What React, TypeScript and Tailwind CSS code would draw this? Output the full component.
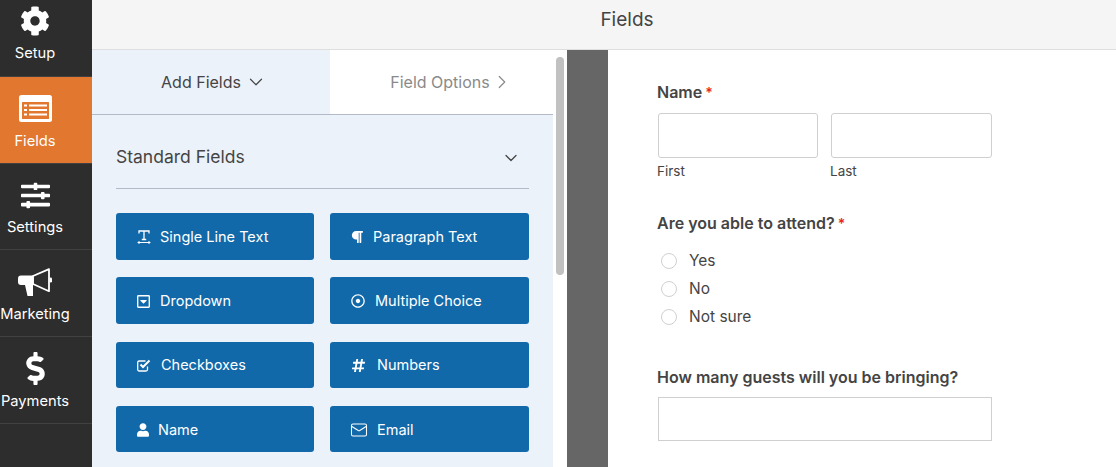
import React from 'react';
import {
  FaCog,
  FaSlidersH,
  FaDollarSign,
  FaParagraph,
  FaRegCaretSquareDown,
  FaRegDotCircle,
  FaHashtag,
  FaUser,
} from 'react-icons/fa';
import { ChevronDown, ChevronRight, Mail } from 'lucide-react';

const FieldsIcon = () => (
  <svg viewBox="0 0 33 27" className="w-[33px] h-[27px]">
    <path
      fill="#fff"
      fillRule="evenodd"
      d="M2.500 0h28A2.500 2.500 0 0 1 33 2.500v22a2.500 2.500 0 0 1-2.500 2.500h-28A2.500 2.500 0 0 1 0 24.500v-22A2.500 2.500 0 0 1 2.500 0ZM3 7.500v16a.5.5 0 0 0 .5.5h26a.5.5 0 0 0 .5-.5v-16a.5.5 0 0 0-.5-.5h-26a.5.5 0 0 0-.5.5Z"
    />
    <path
      fill="#fff"
      d="M5 9.500h3v2H5zM10 9.500h18v2H10zM5 14h3v2H5zM10 14h18v2H10zM5 18.500h3v2H5zM10 18.500h18v2H10z"
    />
  </svg>
);

const BullhornIcon = () => (
  <svg viewBox="0 0 35 29" className="w-[35px] h-[29px]">
    <path fill="#fff" d="M3 7.500h12.500v9H15V28H9.500L7 17H3a3 3 0 0 1-3-3v-3.500a3 3 0 0 1 3-3Z" />
    <path fill="none" stroke="#fff" strokeWidth="1.800" strokeLinejoin="round" d="M15 8 31 1.200v22L15 16Z" />
    <rect x="31.500" y="9.500" width="2.500" height="5" rx="1.200" fill="#fff" />
  </svg>
);

const TextIcon = () => (
  <svg viewBox="0 0 14 14" className="w-[14px] h-[14px]">
    <path fill="none" stroke="#fff" strokeWidth="1.300" d="M2 3.500V1h10v2.500M7 1v8.500M4.800 9.500h4.400" />
    <path fill="none" stroke="#fff" strokeWidth="1" d="M1 12.500h12M2.500 11 1 12.500 2.500 14M11.500 11l1.500 1.500-1.500 1.500" />
  </svg>
);

const CheckIcon = () => (
  <svg viewBox="0 0 14 13" className="w-[14px] h-[13px]">
    <path fill="none" stroke="#fff" strokeWidth="1.300" d="M10.500 7.500v3a1.500 1.500 0 0 1-1.500 1.500H2.200A1.500 1.500 0 0 1 .7 10.500V3.500A1.500 1.500 0 0 1 2.200 2H8.500" />
    <path fill="none" stroke="#fff" strokeWidth="2" d="m3.500 5.500 2.500 2.500 6.500-6.500" />
  </svg>
);

const navItems = [
  { label: 'Setup', icon: <FaCog className="w-[30px] h-[30px]" /> },
  { label: 'Fields', icon: <FieldsIcon />, active: true },
  { label: 'Settings', icon: <FaSlidersH className="w-[29px] h-[29px]" /> },
  { label: 'Marketing', icon: <BullhornIcon /> },
  { label: 'Payments', icon: <FaDollarSign className="w-[33px] h-[33px]" /> },
];

const fieldButtons = [
  { label: 'Single Line Text', icon: <TextIcon />, gap: 'gap-[9px]' },
  { label: 'Paragraph Text', icon: <FaParagraph className="w-[12px] h-[14px]" />, gap: 'gap-[10px]' },
  { label: 'Dropdown', icon: <FaRegCaretSquareDown className="w-[13px] h-[15px]" />, gap: 'gap-[10px]' },
  { label: 'Multiple Choice', icon: <FaRegDotCircle className="w-[14px] h-[14px]" />, gap: 'gap-[10px]' },
  { label: 'Checkboxes', icon: <CheckIcon />, gap: 'gap-[10px]' },
  { label: 'Numbers', icon: <FaHashtag className="w-[15px] h-[15px]" />, gap: 'gap-[11px]' },
  { label: 'Name', icon: <FaUser className="w-[12px] h-[14px]" />, gap: 'gap-[9px]' },
  { label: 'Email', icon: <Mail className="w-[18px] h-[18px] -mx-[1px]" strokeWidth={1.400} />, gap: 'gap-[10px]' },
];

const Required = () => <span className="text-[#e8281c] text-[14px] font-semibold ml-[3px]">*</span>;

const Radio = ({ label }: { label: string }) => (
  <div className="flex items-center h-[28px] pl-[4px]">
    <span className="w-[16px] h-[16px] rounded-full border border-[#d0d0d0] bg-white" />
    <span className="ml-[12px] text-[15.500px] text-[#444]">{label}</span>
  </div>
);

export default function App() {
  return (
    <div className="h-[467px] w-[1116px] flex overflow-hidden bg-white font-['Inter',sans-serif]">
      <aside className="w-[92px] shrink-0 bg-[#2d2d2d] text-white">
        {navItems.map((item) => (
          <div
            key={item.label}
            className={`h-[86.700px] first:h-[77px] flex flex-col items-center justify-end pb-[13px] first:pb-[14px] pr-[22px] border-b border-[#414141] ${
              item.active ? 'bg-[#e27730]' : ''
            }`}
          >
            <div className="h-[36px] flex items-center justify-center">{item.icon}</div>
            <div className="mt-[5px] text-[14.700px] leading-[18px] whitespace-nowrap">{item.label}</div>
          </div>
        ))}
      </aside>

      <div className="flex-1 flex flex-col min-w-0">
        <header className="h-[50px] shrink-0 bg-[#f5f5f5] border-b border-[#dedede] flex items-center justify-center pl-[46px] pb-[9px] text-[19px] text-[#444]">
          Fields
        </header>

        <div className="flex-1 flex min-h-0">
          <div className="w-[461px] shrink-0 bg-[#ecf2fa] flex flex-col">
            <div className="h-[65px] shrink-0 flex border-b border-[#b4bac5]">
              <div className="w-[238px] flex items-center justify-center gap-[4px] pl-[6px] text-[16px] text-[#444]">
                Add Fields
                <ChevronDown className="w-[22px] h-[22px]" strokeWidth={1.300} />
              </div>
              <div className="flex-1 bg-white flex items-center justify-center gap-[1px] pl-[20px] text-[16px] text-[#8a8a8a]">
                Field Options
                <ChevronRight className="w-[22px] h-[22px]" strokeWidth={1.300} />
              </div>
            </div>

            <div className="px-[24px]">
              <div className="h-[74px] flex items-center justify-between border-b border-[#b4bac5] pt-[12px] pr-[10px]">
                <span className="text-[17.500px] text-[#444]">Standard Fields</span>
                <ChevronDown className="w-[20px] h-[20px] -mr-[1.500px] text-[#444]" strokeWidth={1.500} />
              </div>
              <div className="mt-[24px] grid grid-cols-[198px_199px] gap-x-[16px] gap-y-[17.800px]">
                {fieldButtons.map((btn) => (
                  <div
                    key={btn.label}
                    className={`h-[46.500px] rounded-[3px] bg-[#1269a9] text-white flex items-center pl-[21px] pt-[1px] text-[14.500px] ${btn.gap}`}
                  >
                    {btn.icon}
                    <span>{btn.label}</span>
                  </div>
                ))}
              </div>
            </div>
          </div>

          <div className="w-[14px] shrink-0 bg-white pt-[7px] flex justify-center">
            <div className="w-[8px] h-[218px] rounded-full bg-[#c1c1c1]" />
          </div>
          <div className="w-[41px] shrink-0 bg-[#666]" />

          <main className="flex-1 pl-[49px] text-[#444]">
            <div className="mt-[32px] text-[16px] leading-[20px] font-semibold">
              Name
              <Required />
            </div>
            <div className="mt-[10px] flex gap-[13px] pl-[1px]">
              <div className="w-[160px]">
                <div className="h-[45px] rounded-[3px] border border-[#cfcfcf]" />
                <div className="mt-[5px] -ml-[1px] text-[13.500px] leading-[16px]">First</div>
              </div>
              <div className="w-[161px]">
                <div className="h-[45px] rounded-[3px] border border-[#cfcfcf]" />
                <div className="mt-[5px] -ml-[1px] text-[13.500px] leading-[16px]">Last</div>
              </div>
            </div>

            <div className="mt-[34px] text-[16px] leading-[20px] font-semibold">
              Are you able to attend?
              <Required />
            </div>
            <div className="mt-[13px]">
              <Radio label="Yes" />
              <Radio label="No" />
              <Radio label="Not sure" />
            </div>

            <div className="mt-[36px] text-[16px] leading-[20px] font-semibold">
              How many guests will you be bringing?
            </div>
            <div className="mt-[10px] ml-[1px] w-[334px] h-[44px] border border-[#cfcfcf]" />
          </main>
        </div>
      </div>
    </div>
  );
}
